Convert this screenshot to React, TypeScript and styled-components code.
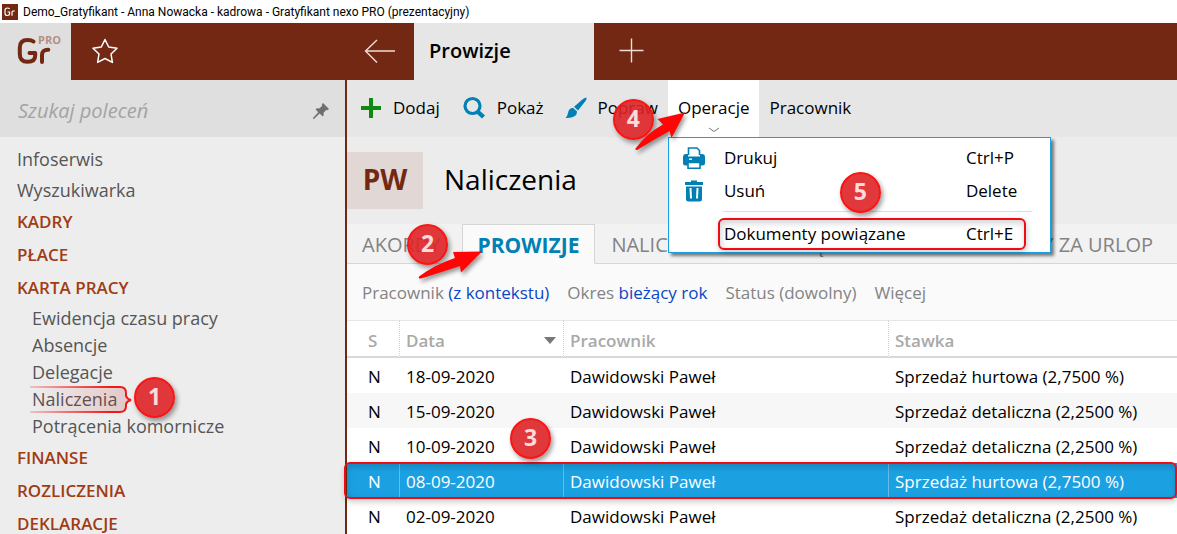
import React from "react";
import styled, { createGlobalStyle, css } from "styled-components";

const brown = "#732813";
const link = "#0a46c4";
const teal = "#0080b5";

const GlobalStyle = createGlobalStyle`
  * { box-sizing: border-box; }
  html, body, #root { height: 100%; }
  body {
    margin: 0;
    overflow: hidden;
    background: #ffffff;
    color: #000000;
    font-family: "Open Sans", "Noto Sans", sans-serif;
    font-size: 17px;
  }
  button, input {
    font: inherit;
    color: inherit;
    background: none;
    border: 0;
    padding: 0;
    margin: 0;
  }
  a { color: inherit; text-decoration: none; }
  ul { list-style: none; margin: 0; padding: 0; }
  h1 { margin: 0; }
  svg { display: block; flex: none; }
`;

const Window = styled.div`
  display: flex;
  flex-direction: column;
  min-height: 100%;
`;

const TitleBar = styled.div`
  display: flex;
  align-items: center;
  gap: 5px;
  height: 23px;
  padding: 0 2px;
  font-family: Roboto, "Open Sans", sans-serif;
  font-size: 12px;
  line-height: 16px;
  white-space: nowrap;
`;

const Header = styled.header`
  display: flex;
  align-items: stretch;
  height: 57px;
  background: ${brown};
  color: #ffffff;
`;

const Logo = styled.a`
  display: flex;
  width: 71px;
  background: #dfdfdf;
`;

const HeaderStart = styled.div`
  display: flex;
  width: 347px;
`;

const HeaderButton = styled.button<{ $width: number }>`
  display: flex;
  align-items: center;
  justify-content: center;
  width: ${(p) => p.$width}px;
  padding: 0 2px 2px 0;
`;

const WindowTab = styled.button`
  width: 180px;
  padding: 0 15px 3px;
  background: #e6e6e6;
  color: #000000;
  font-size: 20px;
  font-weight: 600;
  text-align: left;
`;

const Body = styled.div`
  display: flex;
  flex: 1;
`;

const Sidebar = styled.nav`
  flex: none;
  width: 347px;
  background: #ededed;
  border-right: 2px solid ${brown};
`;

const Search = styled.label`
  display: flex;
  align-items: center;
  height: 57px;
  padding: 4px 15px 0 18px;
  background: #dfdfdf;

  input {
    flex: 1;
    min-width: 0;
    outline: none;
    font-size: 20px;
    font-style: italic;
  }
  input::placeholder { color: #a3a3a3; opacity: 1; }
`;

const Menu = styled.ul`
  padding: 7px 16px 0 17px;
`;

const SubMenu = styled.ul`
  padding: 0 0 2px 15px;
`;

const MenuLink = styled.a<{ $kind: "top" | "group" | "sub" }>`
  display: block;
  white-space: nowrap;
  color: #555555;
  font-size: 18px;
  line-height: 31px;
  ${(p) => p.$kind === "group" && css`
    padding-bottom: 2px;
    color: #a03c14;
    font-size: 17px;
    font-weight: 600;
  `}
  ${(p) => p.$kind === "sub" && css`
    line-height: 27px;
  `}
`;

const Marked = styled.span`
  position: relative;
  display: inline-block;
`;

const Main = styled.main`
  display: flex;
  flex: 1;
  flex-direction: column;
  min-width: 0;
`;

const Toolbar = styled.div`
  display: flex;
  height: 57px;
  padding-left: 2px;
  background: #e6e6e6;
`;

const Tool = styled.button<{ $open?: boolean; $icon?: boolean }>`
  position: relative;
  display: flex;
  align-items: center;
  gap: 12px;
  padding: ${(p) => (p.$icon ? "0 10px 2px 12px" : "0 10px 2px")};
  font-size: 17px;
  white-space: nowrap;
  background: ${(p) => (p.$open ? "#ffffff" : "transparent")};
`;

const Chevron = styled.svg`
  position: absolute;
  left: 50%;
  bottom: 4px;
  margin-left: -6px;
`;

const Heading = styled.div`
  display: flex;
  align-items: center;
  gap: 21px;
  height: 87px;
  background: #ececec;

  h1 {
    padding-bottom: 3px;
    font-size: 28px;
    font-weight: 400;
  }
`;

const Initials = styled.div`
  width: 76px;
  height: 57px;
  line-height: 55px;
  text-align: center;
  background: #e1d8d6;
  color: ${brown};
  font-size: 28px;
  font-weight: 700;
`;

const Tabs = styled.div`
  display: flex;
  gap: 1px;
  height: 40px;
  background: #f2f2f2;
  border-bottom: 1px solid #d6d6d6;
`;

const Tab = styled.button<{ $active?: boolean }>`
  height: 40px;
  padding: 2px 19px 0 14px;
  border: 1px solid transparent;
  color: #838383;
  font-size: 20px;
  line-height: 36px;
  white-space: nowrap;
  ${(p) => p.$active && css`
    padding: 2px 15px 0;
    border-color: #d6d6d6;
    border-bottom-color: #fafafa;
    background: #fafafa;
    color: ${teal};
    font-size: 21px;
    font-weight: 700;
  `}
`;

const Filters = styled.div`
  display: flex;
  align-items: center;
  gap: 18px;
  height: 56px;
  padding: 0 15px;
  background: #fafafa;
  color: #838383;
  font-size: 17px;

  button { white-space: nowrap; }
  b { color: ${link}; font-weight: 400; }
`;

const Table = styled.table`
  width: 100%;
  table-layout: fixed;
  border-collapse: separate;
  border-spacing: 0;
`;

const Th = styled.th<{ $width?: number }>`
  height: 38px;
  width: ${(p) => (p.$width ? p.$width + "px" : "auto")};
  padding: 3px 7px 0 6px;
  border-top: 1px solid #e6e6e6;
  border-bottom: 2px solid #d9d9d9;
  border-right: ${(p) => (p.$width ? "1px dotted #cfcfcf" : "0")};
  color: #a9a9a9;
  font-size: 17px;
  font-weight: 600;
  text-align: left;

  &:first-child { padding-left: 21px; }
`;

const ThContent = styled.div`
  display: flex;
  align-items: center;
  justify-content: space-between;
`;

const Row = styled.tr<{ $selected?: boolean }>`
  &:nth-child(even) { background: #f7f7f7; }
  ${(p) => p.$selected && css`
    && { background: #1ba1e2; }
    color: #ffffff;
  `}
`;

const Td = styled.td<{ $selected?: boolean }>`
  height: 35px;
  padding: 3px 7px 0 6px;
  border-right: 1px solid ${(p) => (p.$selected ? "#62bde9" : "transparent")};
  font-size: 17px;
  line-height: 24px;
  white-space: nowrap;

  &:first-child { padding-left: 21px; }
`;

const Popup = styled.div`
  position: absolute;
  z-index: 2;
  top: 57px;
  left: 0;
  width: 383px;
  height: 116px;
  padding-top: 3px;
  background: #ffffff;
  border: 1px solid #1ba1e2;
  box-shadow: 3px 3px 3px rgba(0, 0, 0, 0.5);
`;

const PopupAnchor = styled.div`
  position: relative;
  display: flex;
`;

const PopupItem = styled.button`
  display: grid;
  grid-template-columns: 41px 1fr 64px;
  align-items: center;
  width: 100%;
  height: 33px;
  padding: 0 20px 0 14px;
  font-size: 17px;
  text-align: left;
  white-space: nowrap;

  span:nth-of-type(1) { grid-column: 2; }
`;

const Divider = styled.hr`
  margin: 4px 18px 5px 54px;
  border: 0;
  border-top: 1px solid #dcdcdc;
`;

const Badge = styled.span<{ $x: number; $y: number }>`
  position: absolute;
  z-index: 4;
  left: ${(p) => p.$x}px;
  top: ${(p) => p.$y}px;
  width: 41px;
  height: 41px;
  border: 2px solid #fa1414;
  border-radius: 50%;
  background: rgba(222, 36, 38, 0.9);
  box-shadow: 2px 3px 5px rgba(0, 0, 0, 0.4);
  color: #fbdcdc;
  font-size: 23px;
  font-weight: 700;
  line-height: 35px;
  text-align: center;
  pointer-events: none;
`;

const Arrow = styled.svg<{ $x: number; $y: number }>`
  position: absolute;
  z-index: 5;
  left: ${(p) => p.$x}px;
  top: ${(p) => p.$y}px;
  overflow: visible;
  filter: drop-shadow(2px 3px 2px rgba(0, 0, 0, 0.4));
  pointer-events: none;
`;

const Frame = styled.span<{ $top: number; $left: number; $right: number; $height: number }>`
  position: absolute;
  z-index: 3;
  top: ${(p) => p.$top}px;
  left: ${(p) => p.$left}px;
  right: ${(p) => p.$right}px;
  height: ${(p) => p.$height}px;
  border: 2px solid #f00a14;
  border-radius: 6px;
  box-shadow: 1px 3px 6px rgba(0, 0, 0, 0.2), inset 1px 3px 7px rgba(0, 0, 0, 0.18);
  pointer-events: none;
`;

const Brace = styled.svg`
  position: absolute;
  left: -2px;
  top: 0;
  overflow: visible;
  pointer-events: none;
`;

const Relative = styled.div`
  position: relative;
`;

const SmallLogo = () => (
  <svg width="16" height="16" viewBox="0 0 16 16" aria-hidden="true">
    <rect width="16" height="16" fill={brown} />
    <path d="M7.6 4.9 Q6.9 4 5.5 4 Q3 4 3 6.3 V9.2 Q3 11.5 5.4 11.5 Q7.6 11.5 7.6 9.6 V8 H5.6 M10 11.8 V8.4 Q10 6.8 12.6 6.9" fill="none" stroke="#fff" strokeWidth="1.2" />
  </svg>
);

const ProLogo = () => (
  <svg width="71" height="57" viewBox="0 0 71 57" aria-hidden="true">
    <path d="M33.500 18.500 Q31.500 17 27.500 17 Q19.800 17 19.800 24.500 V31 Q19.800 38.800 27.500 38.800 Q35.200 38.800 35.200 32.500 V30 H29.500 M42 39 V32 Q42 26.500 48.300 26.700" fill="none" stroke={brown} strokeWidth="4" strokeLinecap="round" strokeLinejoin="round" />
    <text x="38" y="21" fontFamily="Open Sans, sans-serif" fontSize="11" fontWeight="700" fill="#b58f85">PRO</text>
  </svg>
);

const Pin = () => (
  <svg width="18" height="18" viewBox="0 0 18 18" fill="#6f6f6f" aria-hidden="true">
    <path d="M11 1 L17 7 L15.500 8.200 L14.500 7.800 L11.500 10.700 Q12.200 13 10.800 14.500 L7.600 11.500 L2 17 L1 16.700 L1 16 L6.200 10.200 L3.500 7.300 Q5 5.900 7.400 6.500 L10.300 3.600 L9.800 2.300 Z" />
  </svg>
);

type MenuItem = { label: string; group?: boolean; items?: string[] };

const menu: MenuItem[] = [
  { label: "Infoserwis" },
  { label: "Wyszukiwarka" },
  { label: "KADRY", group: true },
  { label: "PŁACE", group: true },
  {
    label: "KARTA PRACY",
    group: true,
    items: ["Ewidencja czasu pracy", "Absencje", "Delegacje", "Naliczenia", "Potrącenia komornicze"],
  },
  { label: "FINANSE", group: true },
  { label: "ROZLICZENIA", group: true },
  { label: "DEKLARACJE", group: true },
];

const rows = [
  ["18-09-2020", "Sprzedaż hurtowa (2,7500 %)"],
  ["15-09-2020", "Sprzedaż detaliczna (2,2500 %)"],
  ["10-09-2020", "Sprzedaż detaliczna (2,2500 %)"],
  ["08-09-2020", "Sprzedaż hurtowa (2,7500 %)"],
  ["02-09-2020", "Sprzedaż detaliczna (2,2500 %)"],
];
const selectedDate = "08-09-2020";

const MarkedLabel = ({ text }: { text: string }) => (
  <Marked>
    {text}
    <Brace width="102" height="27" viewBox="0 0 102 27" aria-hidden="true">
      <defs>
        <linearGradient id="fade" gradientUnits="userSpaceOnUse" x1="0" y1="0" x2="102" y2="0">
          <stop offset="0" stopColor="#f01818" stopOpacity="0.2" />
          <stop offset="0.8" stopColor="#f01818" />
        </linearGradient>
        <linearGradient id="tint" x1="0" y1="0" x2="1" y2="0">
          <stop offset="0" stopColor="#d83030" stopOpacity="0" />
          <stop offset="1" stopColor="#b83030" stopOpacity="0.2" />
        </linearGradient>
      </defs>
      <path d="M0 1 H90 Q96 1 96 7 V10 Q97 13 101 14 Q97 15 96 18 V20 Q96 26 90 26 H0 Z" fill="url(#tint)" />
      <path d="M0 1 H90 Q96 1 96 7 V10 Q97 13 101 14 Q97 15 96 18 V20 Q96 26 90 26 H0" fill="none" stroke="url(#fade)" strokeWidth="2" />
    </Brace>
    <Badge $x={102} $y={-9}>1</Badge>
  </Marked>
);

export default function App() {
  return (
    <>
      <GlobalStyle />
      <Window>
        <TitleBar>
          <SmallLogo />
          Demo_Gratyfikant - Anna Nowacka - kadrowa - Gratyfikant nexo PRO (prezentacyjny)
        </TitleBar>
        <Header>
          <HeaderStart>
            <Logo href="#" aria-label="Gratyfikant PRO"><ProLogo /></Logo>
            <HeaderButton $width={70} aria-label="Ulubione">
              <svg width="26" height="26" viewBox="0 0 26 26" fill="none" stroke="#fff" strokeWidth="1.500" strokeLinejoin="round">
                <path d="M13 1.500 L16.700 9 L25 10.200 L19 16 L20.400 24.400 L13 20.500 L5.600 24.400 L7 16 L1 10.200 L9.300 9 Z" />
              </svg>
            </HeaderButton>
          </HeaderStart>
          <HeaderButton $width={67} aria-label="Wstecz">
            <svg width="32" height="24" viewBox="0 0 32 24" fill="none" stroke="#f0dcd6" strokeWidth="1.400">
              <path d="M13 1 L1.500 12 L13 23.500 M1.500 12 H31" />
            </svg>
          </HeaderButton>
          <WindowTab>Prowizje</WindowTab>
          <HeaderButton $width={77} aria-label="Nowa karta">
            <svg width="25" height="25" viewBox="0 0 25 25" fill="none" stroke="#f0dcd6" strokeWidth="1.400">
              <path d="M12.500 0.500 V24.500 M0.500 12.500 H24.500" />
            </svg>
          </HeaderButton>
        </Header>
        <Body>
          <Sidebar>
            <Search>
              <input type="text" placeholder="Szukaj poleceń" aria-label="Szukaj poleceń" />
              <Pin />
            </Search>
            <Menu>
              {menu.map((entry) => (
                <li key={entry.label}>
                  <MenuLink href="#" $kind={entry.group ? "group" : "top"}>{entry.label}</MenuLink>
                  {entry.items && (
                    <SubMenu>
                      {entry.items.map((label) => (
                        <li key={label}>
                          <MenuLink href="#" $kind="sub">
                            {label === "Naliczenia" ? <MarkedLabel text={label} /> : label}
                          </MenuLink>
                        </li>
                      ))}
                    </SubMenu>
                  )}
                </li>
              ))}
            </Menu>
          </Sidebar>
          <Main>
            <Toolbar>
              <Tool $icon>
                <svg width="20" height="20" viewBox="0 0 20 20"><path d="M8 0 H12 V8 H20 V12 H12 V20 H8 V12 H0 V8 H8 Z" fill="#0f8a10" /></svg>
                Dodaj
              </Tool>
              <Tool $icon>
                <svg width="23" height="23" viewBox="0 0 23 23" fill="none" stroke={teal}>
                  <circle cx="10.500" cy="10" r="7.500" strokeWidth="3.200" />
                  <path d="M15.500 15.500 L21.500 21" strokeWidth="4.400" />
                </svg>
                Pokaż
              </Tool>
              <Tool $icon>
                <svg width="20" height="22" viewBox="1 0 20 22" fill={teal} overflow="visible">
                  <path d="M21.500 0.500 Q22 2 20.500 4 L13 13.500 L9 9.800 L18 2 Q20 0.500 21.500 0.500 Z M8 10.700 L12 14.500 Q12.500 21.500 0.500 21 Q2.500 19 3 16 Q3.800 11 8 10.700 Z" />
                </svg>
                Popraw
              </Tool>
              <PopupAnchor>
                <Tool $open aria-expanded="true">
                  Operacje
                  <Chevron width="12" height="6" viewBox="0 0 12 6" fill="none" stroke="#777">
                    <path d="M1 1 L6 4.500 L11 1" />
                  </Chevron>
                </Tool>
                <Badge $x={-55} $y={19}>4</Badge>
                <Arrow $x={-33} $y={32} width="50" height="39" viewBox="0 0 50 39" aria-hidden="true">
                  <path d="M0.500 36.500 Q12 21 28 12.500 L22.500 7 L50 0.500 L36.500 26 L34.500 19 Q18 28 3 37.500 Q0 39 0.500 36.500 Z" fill="#ff0505" />
                </Arrow>
                <Popup>
                  <PopupItem>
                    <svg width="22" height="22" viewBox="0 0 22 22">
                      <path d="M5.500 8 V1 H14 L16.500 3.500 V8" fill="#fff" stroke={teal} strokeWidth="1.600" />
                      <path d="M3 7 H5 V9.500 H17 V7 H19 Q22 7 22 10 V16 Q22 18.500 19.500 18.500 H2.500 Q0 18.500 0 16 V10 Q0 7 3 7 Z" fill={teal} />
                      <path d="M5 15.500 H17 V21.200 H5 Z" fill="#fff" stroke={teal} strokeWidth="1.600" />
                      <path d="M6 12.200 H9" stroke="#fff" strokeWidth="1.400" />
                    </svg>
                    <span>Drukuj</span><span>Ctrl+P</span>
                  </PopupItem>
                  <PopupItem>
                    <svg width="22" height="22" viewBox="0 0 22 22" fill={teal}>
                      <path d="M2 2 H8 V0.500 H14 V2 H20 V5 H2 Z" />
                      <path d="M3 6.500 H19 V19 Q19 21.500 16.500 21.500 H5.500 Q3 21.500 3 19 Z" />
                      <path d="M7.500 8 L8 18.500 M14.500 8 L14 18.500" stroke="#fff" strokeWidth="2" />
                    </svg>
                    <span>Usuń</span><span>Delete</span>
                  </PopupItem>
                  <Divider />
                  <PopupItem><span>Dokumenty powiązane</span><span>Ctrl+E</span></PopupItem>
                  <Frame $top={80} $left={49} $right={24} $height={32} />
                  <Badge $x={171} $y={34}>5</Badge>
                </Popup>
              </PopupAnchor>
              <Tool>Pracownik</Tool>
            </Toolbar>
            <Heading>
              <Initials>PW</Initials>
              <h1>Naliczenia</h1>
            </Heading>
            <Relative>
              <Tabs>
                <Tab>AKORDY</Tab>
                <Tab $active>PROWIZJE</Tab>
                <Tab>NALICZENIA</Tab>
                <Tab>POTRĄCENIA</Tab>
                <Tab>EKWIWALENTY ZA URLOP</Tab>
              </Tabs>
              <Badge $x={60} $y={0}>2</Badge>
              <Arrow $x={71} $y={26} width="64" height="30" viewBox="0 0 64 30" aria-hidden="true">
                <path d="M1 26.500 Q18 14 37 8 L35 2 L64 1.500 L43 22.500 L42 16 Q24 22 3 28.500 Q0 29 1 26.500 Z" fill="#ff0505" />
              </Arrow>
            </Relative>
            <Filters>
              <button>Pracownik <b>(z kontekstu)</b></button>
              <button>Okres <b>bieżący rok</b></button>
              <button>Status (dowolny)</button>
              <button>Więcej</button>
            </Filters>
            <Relative>
              <Table>
                <thead>
                  <tr>
                    <Th $width={53}>S</Th>
                    <Th $width={164}>
                      <ThContent>
                        Data
                        <svg width="12" height="7" viewBox="0 0 12 7"><path d="M0 0 H12 L6 7 Z" fill="#777" /></svg>
                      </ThContent>
                    </Th>
                    <Th $width={325}>Pracownik</Th>
                    <Th>Stawka</Th>
                  </tr>
                </thead>
                <tbody>
                  {rows.map(([date, rate]) => {
                    const selected = date === selectedDate;
                    return (
                      <Row key={date} $selected={selected}>
                        <Td $selected={selected}>N</Td>
                        <Td $selected={selected}>{date}</Td>
                        <Td $selected={selected}>Dawidowski Paweł</Td>
                        <Td>{rate}</Td>
                      </Row>
                    );
                  })}
                </tbody>
              </Table>
              <Frame $top={142} $left={-3} $right={0} $height={37} />
              <Badge $x={163} $y={98}>3</Badge>
            </Relative>
          </Main>
        </Body>
      </Window>
    </>
  );
}
